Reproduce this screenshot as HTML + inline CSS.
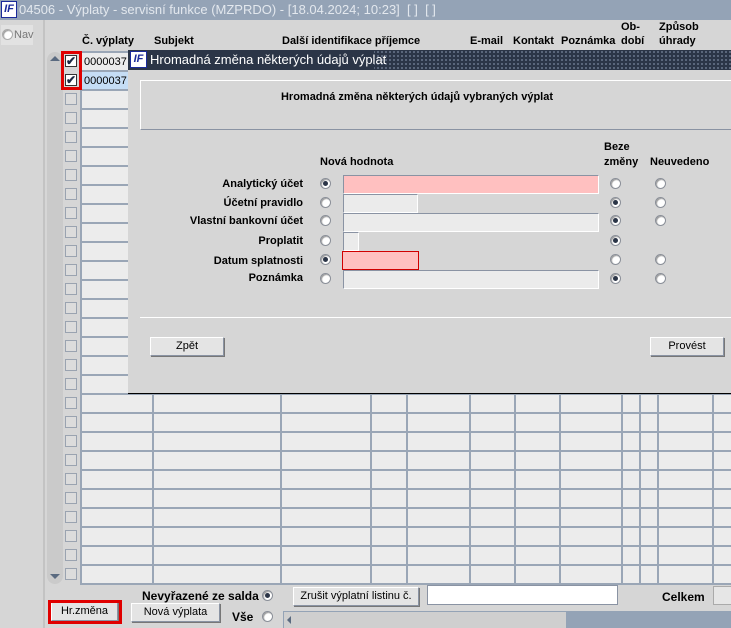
<!DOCTYPE html>
<html><head><meta charset="utf-8"><style>
*{box-sizing:border-box;margin:0;padding:0}
body{width:731px;height:628px;overflow:hidden;background:#d6d6d6;font-family:"Liberation Sans",sans-serif;font-size:11px;color:#000;position:relative}
.a{position:absolute}
.b{font-weight:bold}
.rad{position:absolute;width:11px;height:11px;border-radius:50%;background:#fff;border:1px solid #8a8f98;box-shadow:inset 1px 1px 1px #999}
.rad.on::after{content:"";position:absolute;left:2px;top:2px;width:5px;height:5px;border-radius:50%;background:#2b3547}
.inp{position:absolute;height:19px;background:#ebebeb;border:1px solid #fff;border-top-color:#8a93a3;border-left-color:#8a93a3}
.btn{position:absolute;height:19px;background:#e4e4e4;border:1px solid #8a93a3;border-top-color:#fff;border-left-color:#fff;box-shadow:1px 1px 0 #777;text-align:center;line-height:17px;font-size:11px}
.cb{position:absolute;left:65px;width:12px;height:12px;border:1px solid #9aa3b0;background:#dcdcdc}
</style></head><body>
<!-- title bar -->
<div class="a" style="left:0;top:0;width:731px;height:20px;background:#94a3b6"></div>
<div class="a" style="left:1px;top:1px;width:16px;height:17px;background:#fff;border:1px solid #1a2a9a;color:#1a2a9a;font-weight:bold;font-style:italic;font-size:11px;line-height:15px;text-align:center">IF</div>
<div class="a" style="left:19px;top:2px;color:#e3e8ee;font-size:13px;white-space:nowrap">04506 - Výplaty - servisní funkce (MZPRDO) - [18.04.2024; 10:23]&nbsp; [ ]&nbsp; [ ]</div>
<!-- left pane -->
<div class="a" style="left:0;top:20px;width:45px;height:608px;background:#d6d6d6;border-right:2px solid #c3c3c3"></div>
<div class="a" style="left:1px;top:25px;width:32px;height:20px;background:#e2e2e2"></div>
<div class="rad" style="left:2px;top:29px;border-color:#aaa"></div>
<div class="a" style="left:14px;top:29px;color:#777;font-size:11px">Nav</div>
<!-- scroll column -->
<div class="a" style="left:47px;top:52px;width:16px;height:532px;background:#cacaca;border-radius:8px"></div>
<div class="a" style="left:50px;top:56px;width:0;height:0;border-left:5px solid transparent;border-right:5px solid transparent;border-bottom:5px solid #5a6a80"></div>
<div class="a" style="left:50px;top:574px;width:0;height:0;border-left:5px solid transparent;border-right:5px solid transparent;border-top:5px solid #5a6a80"></div>
<!-- headers -->
<div class="a b" style="left:82px;top:35px">Č. výplaty</div>
<div class="a b" style="left:154px;top:35px">Subjekt</div>
<div class="a b" style="left:282px;top:35px">Další identifikace příjemce</div>
<div class="a b" style="left:470px;top:35px">E-mail</div>
<div class="a b" style="left:513px;top:35px">Kontakt</div>
<div class="a b" style="left:561px;top:35px">Poznámka</div>
<div class="a b" style="left:621px;top:21px">Ob-</div>
<div class="a b" style="left:621px;top:35px">dobí</div>
<div class="a b" style="left:659px;top:21px">Způsob</div>
<div class="a b" style="left:659px;top:35px">úhrady</div>
<!-- grid -->
<svg class="a" style="left:0;top:0" width="731" height="628">
<g fill="#ececec" stroke="#9aa6b6" stroke-width="2">
<rect x="81" y="52" width="660" height="532"/>
</g>
<g stroke="#9aa6b6" stroke-width="2">
<line x1="81" y1="71" x2="731" y2="71"/><line x1="81" y1="90" x2="731" y2="90"/><line x1="81" y1="109" x2="731" y2="109"/><line x1="81" y1="128" x2="731" y2="128"/><line x1="81" y1="147" x2="731" y2="147"/><line x1="81" y1="166" x2="731" y2="166"/><line x1="81" y1="185" x2="731" y2="185"/><line x1="81" y1="204" x2="731" y2="204"/><line x1="81" y1="223" x2="731" y2="223"/><line x1="81" y1="242" x2="731" y2="242"/><line x1="81" y1="261" x2="731" y2="261"/><line x1="81" y1="280" x2="731" y2="280"/><line x1="81" y1="299" x2="731" y2="299"/><line x1="81" y1="318" x2="731" y2="318"/><line x1="81" y1="337" x2="731" y2="337"/><line x1="81" y1="356" x2="731" y2="356"/><line x1="81" y1="375" x2="731" y2="375"/><line x1="81" y1="394" x2="731" y2="394"/><line x1="81" y1="413" x2="731" y2="413"/><line x1="81" y1="432" x2="731" y2="432"/><line x1="81" y1="451" x2="731" y2="451"/><line x1="81" y1="470" x2="731" y2="470"/><line x1="81" y1="489" x2="731" y2="489"/><line x1="81" y1="508" x2="731" y2="508"/><line x1="81" y1="527" x2="731" y2="527"/><line x1="81" y1="546" x2="731" y2="546"/><line x1="81" y1="565" x2="731" y2="565"/>
<line x1="153" y1="52" x2="153" y2="584"/><line x1="281" y1="52" x2="281" y2="584"/><line x1="371" y1="52" x2="371" y2="584"/><line x1="407" y1="52" x2="407" y2="584"/><line x1="470" y1="52" x2="470" y2="584"/><line x1="515" y1="52" x2="515" y2="584"/><line x1="560" y1="52" x2="560" y2="584"/><line x1="622" y1="52" x2="622" y2="584"/><line x1="640" y1="52" x2="640" y2="584"/><line x1="658" y1="52" x2="658" y2="584"/><line x1="713" y1="52" x2="713" y2="584"/>
</g>
<rect x="82" y="72" width="70" height="17" fill="#c5ddf5"/>
</svg>
<div class="a" style="left:84px;top:56px;font-size:11px">0000037</div>
<div class="a" style="left:84px;top:75px;font-size:11px">0000037</div>
<!-- checkboxes -->
<div id="cbs"></div>
<div class="cb" style="top:55px;background:#fff;border-color:#333;font-size:12px;line-height:10px;text-align:center;font-weight:bold;color:#1c2a44">✔</div>
<div class="cb" style="top:74px;background:#fff;border-color:#333;font-size:12px;line-height:10px;text-align:center;font-weight:bold;color:#1c2a44">✔</div>
<div class="cb" style="top:93px"></div><div class="cb" style="top:112px"></div><div class="cb" style="top:131px"></div><div class="cb" style="top:150px"></div><div class="cb" style="top:169px"></div><div class="cb" style="top:188px"></div><div class="cb" style="top:207px"></div><div class="cb" style="top:226px"></div><div class="cb" style="top:245px"></div><div class="cb" style="top:264px"></div><div class="cb" style="top:283px"></div><div class="cb" style="top:302px"></div><div class="cb" style="top:321px"></div><div class="cb" style="top:340px"></div><div class="cb" style="top:359px"></div><div class="cb" style="top:378px"></div><div class="cb" style="top:397px"></div><div class="cb" style="top:416px"></div><div class="cb" style="top:435px"></div><div class="cb" style="top:454px"></div><div class="cb" style="top:473px"></div><div class="cb" style="top:492px"></div><div class="cb" style="top:511px"></div><div class="cb" style="top:530px"></div><div class="cb" style="top:549px"></div><div class="cb" style="top:568px"></div>
<div class="a" style="left:61px;top:51px;width:21px;height:39px;border:3px solid #e00000"></div>
<!-- dialog -->
<div class="a" style="left:128px;top:50px;width:603px;height:20px;background:#2b3547;background-image:radial-gradient(#6a778c 0.8px,transparent 1px);background-size:4px 4px"></div>
<div class="a" style="left:128px;top:50px;width:246px;height:20px;background:#2b3547"></div>
<div class="a" style="left:130px;top:51px;width:17px;height:17px;background:#fff;border:1px solid #1a2a9a;color:#1a2a9a;font-weight:bold;font-style:italic;font-size:11px;line-height:15px;text-align:center">IF</div>
<div class="a" style="left:150px;top:52px;color:#fff;font-size:13px">Hromadná změna některých údajů výplat</div>
<div class="a" style="left:128px;top:70px;width:603px;height:324px;background:#d6d6d6;border-bottom:1px solid #000"></div>
<div class="a" style="left:140px;top:80px;width:591px;height:50px;border:1px solid #fff;border-right:none;border-bottom-color:#8a93a3"></div>
<div class="a b" style="left:140px;top:91px;width:554px;text-align:center">Hromadná změna některých údajů vybraných výplat</div>
<div class="a" style="left:140px;top:131px;width:591px;height:187px;border-bottom:1px solid #fff"></div>
<div class="a b" style="left:320px;top:156px">Nová hodnota</div>
<div class="a b" style="left:604px;top:141px">Beze</div>
<div class="a b" style="left:604px;top:156px">změny</div>
<div class="a b" style="left:650px;top:156px">Neuvedeno</div>
<div class="a b" style="left:140px;top:178px;width:163px;text-align:right">Analytický účet</div>
<div class="a b" style="left:140px;top:197px;width:163px;text-align:right">Účetní pravidlo</div>
<div class="a b" style="left:140px;top:215px;width:163px;text-align:right">Vlastní bankovní účet</div>
<div class="a b" style="left:140px;top:235px;width:163px;text-align:right">Proplatit</div>
<div class="a b" style="left:140px;top:255px;width:163px;text-align:right">Datum splatnosti</div>
<div class="a b" style="left:140px;top:272px;width:163px;text-align:right">Poznámka</div>
<div class="rad on" style="left:320px;top:178px"></div>
<div class="rad" style="left:320px;top:197px"></div>
<div class="rad" style="left:320px;top:215px"></div>
<div class="rad" style="left:320px;top:235px"></div>
<div class="rad on" style="left:320px;top:254px"></div>
<div class="rad" style="left:320px;top:273px"></div>
<div class="inp" style="left:343px;top:175px;width:256px;background:#ffc0c0"></div>
<div class="inp" style="left:343px;top:194px;width:75px"></div>
<div class="inp" style="left:343px;top:213px;width:256px"></div>
<div class="inp" style="left:343px;top:232px;width:16px"></div>
<div class="a" style="left:342px;top:251px;width:77px;height:19px;background:#ffc0c0;border:1px solid #d00000"></div>
<div class="inp" style="left:343px;top:270px;width:256px"></div>
<div class="rad" style="left:610px;top:178px"></div><div class="rad" style="left:655px;top:178px"></div>
<div class="rad on" style="left:610px;top:197px"></div><div class="rad" style="left:655px;top:197px"></div>
<div class="rad on" style="left:610px;top:215px"></div><div class="rad" style="left:655px;top:215px"></div>
<div class="rad on" style="left:610px;top:235px"></div>
<div class="rad" style="left:610px;top:254px"></div><div class="rad" style="left:655px;top:254px"></div>
<div class="rad on" style="left:610px;top:273px"></div><div class="rad" style="left:655px;top:273px"></div>
<div class="btn" style="left:150px;top:337px;width:74px">Zpět</div>
<div class="btn" style="left:650px;top:337px;width:74px">Provést</div>
<!-- bottom -->
<div class="a b" style="left:142px;top:589px;font-size:12px">Nevyřazené ze salda</div>
<div class="rad on" style="left:262px;top:590px"></div>
<div class="btn" style="left:293px;top:587px;width:126px">Zrušit výplatní listinu č.</div>
<div class="a" style="left:427px;top:585px;width:191px;height:20px;background:#fff;border:1px solid #8a93a3"></div>
<div class="a b" style="left:662px;top:590px;font-size:12px">Celkem</div>
<div class="a" style="left:713px;top:586px;width:20px;height:19px;background:#e6e6e6;border:1px solid #aaa"></div>
<div class="btn" style="left:51px;top:602px;width:67px">Hr.změna</div>
<div class="a" style="left:48px;top:600px;width:74px;height:24px;border:3px solid #e00000"></div>
<div class="btn" style="left:131px;top:603px;width:89px">Nová výplata</div>
<div class="a b" style="left:232px;top:610px;font-size:12px">Vše</div>
<div class="rad" style="left:262px;top:611px"></div>
<div class="a" style="left:283px;top:611px;width:448px;height:17px;background:#94a3b6"></div>
<div class="a" style="left:284px;top:612px;width:282px;height:16px;background:#cfcfcf"></div>
<div class="a" style="left:287px;top:616px;width:0;height:0;border-top:4px solid transparent;border-bottom:4px solid transparent;border-right:4px solid #5a6a80"></div>
</body></html>
